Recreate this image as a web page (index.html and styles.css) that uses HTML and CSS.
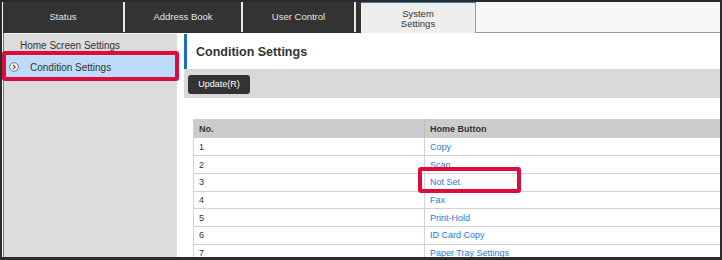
FILE: index.html
```html
<!DOCTYPE html>
<html lang="en">
<head>
    <meta charset="UTF-8">
    <title>System Settings - Condition Settings</title>
    <link rel="stylesheet" href="styles.css">
</head>
<body>
    <div class="frame">
        <div class="page">
            <div class="tabs">
                <div class="tab">Status</div>
                <div class="tab">Address Book</div>
                <div class="tab tab-last">User Control</div>
                <div class="tab-gap"></div>
                <div class="tab active">System<br>Settings</div>
                <div class="tab-fill"></div>
            </div>

            <div class="content">
                <div class="sidebar">
                    <div class="side-item">Home Screen Settings</div>
                    <div class="side-item selected">
                        <svg class="chevron" width="10" height="10" viewBox="0 0 10 10">
                            <circle cx="5" cy="5" r="4.3" fill="#f4f4f4" stroke="#777" stroke-width="1"/>
                            <path d="M4 2.8 L6.1 5 L4 7.2" fill="none" stroke="#555" stroke-width="1.2"/>
                        </svg>
                        Condition Settings
                    </div>
                </div>

                <div class="main">
                    <div class="heading">Condition Settings</div>
                    <div class="toolbar">
                        <button class="btn">Update(R)</button>
                    </div>

                    <table class="grid">
                        <thead>
                            <tr>
                                <th class="col-no">No.</th>
                                <th>Home Button</th>
                            </tr>
                        </thead>
                        <tbody>
                            <tr><td>1</td><td><a href="#">Copy</a></td></tr>
                            <tr><td>2</td><td><a href="#">Scan</a></td></tr>
                            <tr><td>3</td><td><a href="#">Not Set</a></td></tr>
                            <tr><td>4</td><td><a href="#">Fax</a></td></tr>
                            <tr><td>5</td><td><a href="#">Print-Hold</a></td></tr>
                            <tr><td>6</td><td><a href="#">ID Card Copy</a></td></tr>
                            <tr><td>7</td><td><a href="#">Paper Tray Settings</a></td></tr>
                        </tbody>
                    </table>
                </div>
            </div>
        </div>

        <!-- callout marks -->
        <div class="mark mark-side"></div>
        <div class="mark mark-cell"></div>
    </div>
</body>
</html>
```

FILE: styles.css
```css
:root {
    --dark: #333333;
    --link: #2a78d4;
    --mark: #df0a3d;
    --line: #d2d2d2;
}

* {
    box-sizing: border-box;
    margin: 0;
    padding: 0;
}

body {
    font-family: "Liberation Sans", Arial, sans-serif;
    color: var(--dark);
    background: #fff;
}

.frame {
    position: relative;
    width: 722px;
    height: 260px;
    border: 2px solid #2b2b2b;
    border-bottom-width: 3px;
    overflow: hidden;
}

.page {
    height: 100%;
    border-left: 1px solid #fff;
    display: flex;
    flex-direction: column;
}

/* top tabs */
.tabs {
    display: flex;
    height: 31px;
    background: #333;
    flex-shrink: 0;
}

.tab {
    width: 122px;
    height: 30px;
    flex-shrink: 0;
    display: flex;
    align-items: center;
    justify-content: center;
    text-align: center;
    color: #e4e4e4;
    font-size: 9.5px;
    line-height: 10px;
    border-right: 2px solid #e8e8e8;
}

.tab:nth-child(2) {
    width: 118px;
}

.tab-last {
    width: 113px;
}

.tab-gap {
    width: 5px;
    flex-shrink: 0;
}

.tab.active {
    width: 115px;
    height: 31px;
    background: #eeeeee;
    color: #333;
    border-top: 1px solid #2e78c6;
    border-right: 1px solid #9a9a9a;
    padding-top: 1px;
}

.tab-fill {
    flex: 1;
    height: 31px;
    background: #f7f7f7;
    border-bottom: 1px solid #9a9a9a;
}

/* body */
.content {
    flex: 1;
    display: flex;
    border-left: 1px solid #7a7a7a;
    min-height: 0;
}

.sidebar {
    width: 173px;
    background: #dcdcdc;
    border-top: 1px solid #eeeeee;
    flex-shrink: 0;
}

.side-item {
    height: 22px;
    display: flex;
    align-items: center;
    padding-left: 16px;
    font-size: 10px;
    color: #333;
}

.side-item.selected {
    background: #bcdcf9;
    padding-left: 5px;
}

.chevron {
    margin-right: 11px;
}

.main {
    flex: 1;
    margin-left: 7px;
    overflow: hidden;
}

.heading {
    height: 35px;
    margin-top: 1px;
    padding-left: 9px;
    border-left: 3px solid #1f6fbd;
    display: flex;
    align-items: center;
    font-size: 12.5px;
    font-weight: bold;
    color: #333;
}

.toolbar {
    height: 29px;
    background: #d9d9d9;
    padding: 4px 4px;
}

.btn {
    height: 19px;
    width: 62px;
    border: none;
    border-radius: 3px;
    background: #333;
    color: #fff;
    font-family: inherit;
    font-size: 9px;
}

.grid {
    width: 530px;
    margin: 21px 0 0 9px;
    border-collapse: collapse;
    font-size: 9px;
    border-left: 1px solid var(--line);
}

.grid th {
    height: 19px;
    background: #cccccc;
    text-align: left;
    padding-left: 5px;
    font-weight: bold;
    color: #333;
}

.grid .col-no {
    width: 231px;
    border-right: 1px solid #bdbdbd;
}

.grid td {
    height: 17.7px;
    padding: 0 0 0 5px;
    border-bottom: 1px solid var(--line);
    color: #333;
}

.grid td:first-child {
    border-right: 1px solid var(--line);
}

.grid a {
    color: var(--link);
    text-decoration: none;
}

/* red callouts */
.mark {
    position: absolute;
    border: 4px solid var(--mark);
    border-radius: 3px;
}

.mark-side {
    left: 0;
    top: 49px;
    width: 177px;
    height: 30px;
}

.mark-cell {
    left: 416px;
    top: 165px;
    width: 103px;
    height: 26px;
}
```
